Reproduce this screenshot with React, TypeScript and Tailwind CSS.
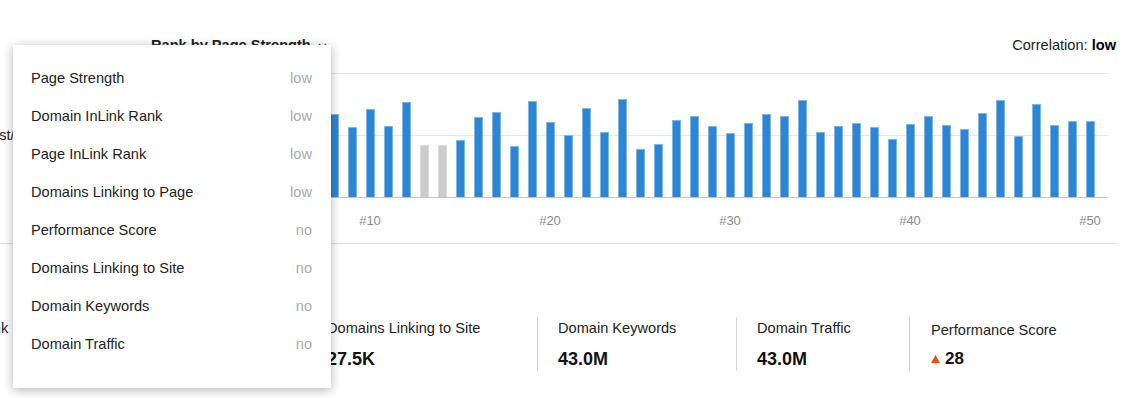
import React from 'react'

const BARS = [
  90, 75, 60, 85, 70, 95, 80, 83, 70, 88,
  71, 95, 52, 52, 57, 80, 85, 51, 96, 75,
  62, 89, 65, 98, 48, 53, 77, 81, 71, 64,
  74, 83, 81, 97, 65, 71, 74, 70, 58, 73,
  81, 72, 68, 84, 97, 61, 93, 72, 76, 76,
]
const GRAY = [13, 14]

const METRICS = [
  { label: 'Page Strength', corr: 'low' },
  { label: 'Domain InLink Rank', corr: 'low' },
  { label: 'Page InLink Rank', corr: 'low' },
  { label: 'Domains Linking to Page', corr: 'low' },
  { label: 'Performance Score', corr: 'no' },
  { label: 'Domains Linking to Site', corr: 'no' },
  { label: 'Domain Keywords', corr: 'no' },
  { label: 'Domain Traffic', corr: 'no' },
]

const STATS = [
  { label: 'Page InLink Rank', value: '12', width: 'w-[195px]', first: true },
  { label: 'Domains Linking to Page', value: '1.2K', width: 'w-[238px]' },
  { label: 'Domains Linking to Site', value: '27.5K', width: 'w-[231px]' },
  { label: 'Domain Keywords', value: '43.0M', width: 'w-[199px]' },
  { label: 'Domain Traffic', value: '43.0M', width: 'w-[173px]' },
]

export default function App() {
  return (
    <div className="relative w-[1131px] h-[398px] overflow-hidden bg-white font-['Liberation_Sans',Arial,sans-serif] text-[#222]">
      {/* chart section */}
      <div className="mr-[15px] pt-[37px] border-b border-[#dcdcdc]">
        <div className="flex items-baseline justify-between pl-[151px] text-[14.6px] leading-4">
          <div className="flex items-center gap-[7px] font-bold">
            Rank by Page Strength
            <svg width="9" height="6" viewBox="0 0 9 6" className="mt-[2px]">
              <path d="M1 1l3.5 3.5L8 1" fill="none" stroke="#555" strokeWidth="1.4" />
            </svg>
          </div>
          <div>
            Correlation: <span className="font-bold text-black">low</span>
          </div>
        </div>

        <div className="flex mt-[20px]">
          <div className="w-[199px] h-[125px] flex items-center overflow-hidden">
            <span className="ml-[-27px] text-[14.5px] whitespace-nowrap">Worst/Best</span>
          </div>
          <div className="w-[909px]">
            <div className="relative h-[125px] border-t border-b border-t-[#e6e6e6] border-b-[#c4c4c4] pr-[9px]">
              <div className="absolute left-0 right-0 top-[61px] border-t border-[#e6e6e6]" />
              <div className="relative flex items-end h-full">
                {BARS.map((h, i) => {
                  const gray = GRAY.includes(i + 1)
                  return (
                    <div key={i} className="w-[18px] flex justify-center">
                      <div
                        className={`w-[9px] border border-b-0 ${
                          gray ? 'bg-[#cccccc] border-[#dcdcdc]' : 'bg-[#2d85d6] border-[#7fb6e8]'
                        }`}
                        style={{ height: h }}
                      />
                    </div>
                  )
                })}
              </div>
            </div>
            <div className="flex h-[45px] items-center pr-[9px]">
              {BARS.map((_, i) => (
                <div key={i} className="w-[18px] flex justify-center">
                  {(i + 1) % 10 === 0 && (
                    <span className="text-[13px] text-[#8a8a8a] whitespace-nowrap">#{i + 1}</span>
                  )}
                </div>
              ))}
            </div>
          </div>
        </div>
      </div>

      {/* stats row */}
      <div className="flex mt-[73px] ml-[-127px]">
        {STATS.map((s) => (
          <div
            key={s.label}
            className={`${s.width} shrink-0 h-[54px] pl-5 pt-[3px] ${s.first ? '' : 'border-l border-[#d4d4d4]'}`}
          >
            <div className="text-[14.6px] leading-4 whitespace-nowrap">{s.label}</div>
            <div className="mt-[12px] text-[18px] leading-[22px] font-bold text-[#111]">{s.value}</div>
          </div>
        ))}
        <div className="shrink-0 h-[54px] pl-[21px] pt-[5px] border-l border-[#d4d4d4]">
          <div className="text-[14.6px] leading-4 whitespace-nowrap">Performance Score</div>
          <div className="mt-[10px] flex items-center gap-[5px] h-[22px]">
            <svg width="9" height="8" viewBox="0 0 9 8">
              <path d="M4.5 0L9 8H0z" fill="#f24e0c" />
            </svg>
            <span className="text-[17px] font-bold text-[#111]">28</span>
          </div>
        </div>
      </div>

      {/* correlation dropdown */}
      <div className="absolute left-[13px] top-[45px] w-[318px] h-[343px] bg-white shadow-[0_2px_10px_rgba(0,0,0,0.3)] pt-[15px]">
        {METRICS.map((m) => (
          <div key={m.label} className="flex h-[38px] items-center justify-between pl-[18px] pr-[19px] text-[14.6px]">
            <span className="text-[#222]">{m.label}</span>
            <span className="text-[#aaaaaa]">{m.corr}</span>
          </div>
        ))}
      </div>
    </div>
  )
}
